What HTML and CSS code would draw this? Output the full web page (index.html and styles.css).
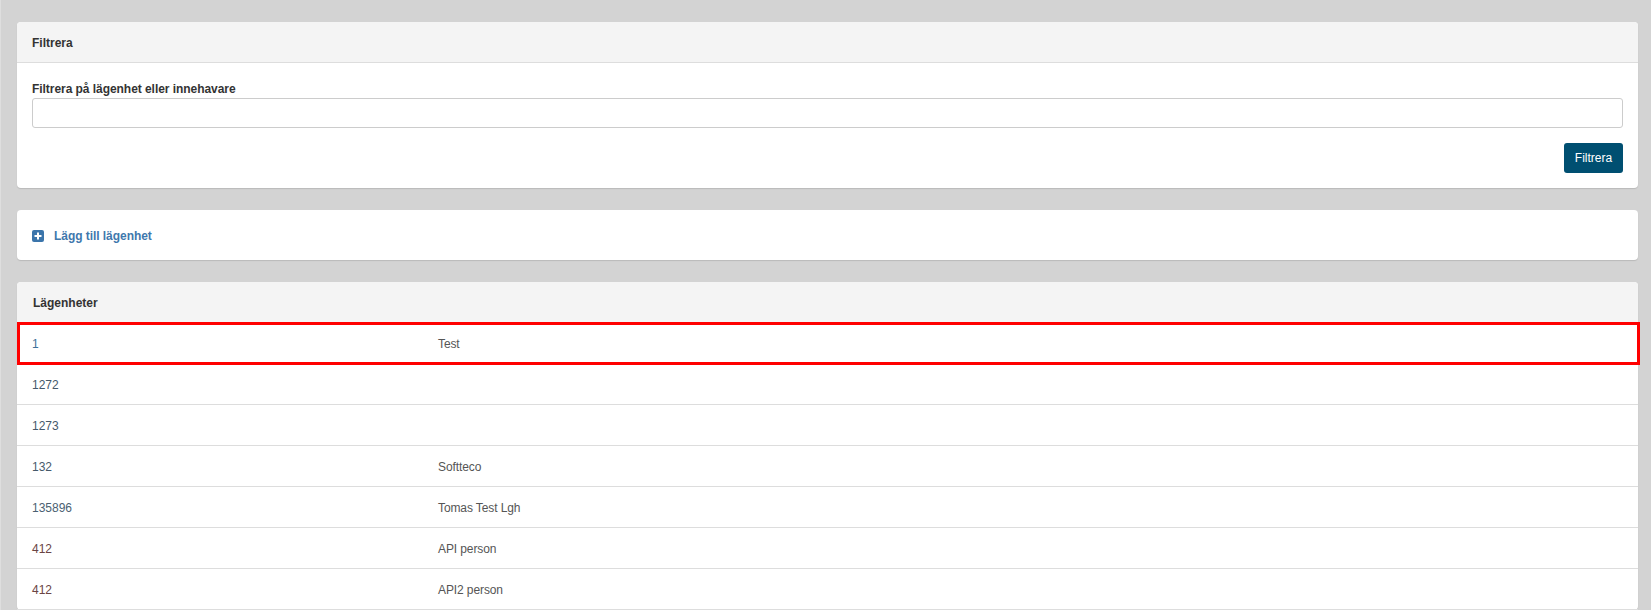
FILE: index.html
```html
<!DOCTYPE html>
<html lang="sv">
<head>
    <meta charset="UTF-8">
    <meta name="viewport" content="width=device-width, initial-scale=1.0">
    <title>Lägenheter</title>
    <link rel="stylesheet" href="styles.css">
</head>
<body>
    <div class="card card-filter">
        <div class="card-head">Filtrera</div>
        <div class="card-body">
            <label for="filter">Filtrera på lägenhet eller innehavare</label>
            <input type="text" id="filter">
            <div class="actions">
                <button>Filtrera</button>
            </div>
        </div>
    </div>

    <div class="card card-add">
        <svg class="icon-add" width="12" height="12" viewBox="0 0 12 12">
            <rect width="12" height="12" rx="2" fill="#3b75ab"/>
            <path d="M5 2.5h2V5h2.5v2H7v2.5H5V7H2.5V5H5z" fill="#fff"/>
        </svg>
        <a href="#">Lägg till lägenhet</a>
    </div>

    <div class="card">
        <div class="card-head head-list">Lägenheter</div>
        <div class="row row-marked"><a class="num blue" href="#">1</a><span class="owner">Test</span></div>
        <div class="row"><a class="num navy" href="#">1272</a><span class="owner"></span></div>
        <div class="row"><a class="num navy" href="#">1273</a><span class="owner"></span></div>
        <div class="row"><a class="num navy" href="#">132</a><span class="owner">Softteco</span></div>
        <div class="row"><a class="num slate" href="#">135896</a><span class="owner">Tomas Test Lgh</span></div>
        <div class="row"><a class="num maroon" href="#">412</a><span class="owner">API person</span></div>
        <div class="row"><a class="num maroon" href="#">412</a><span class="owner">API2 person</span></div>
    </div>
</body>
</html>
```

FILE: styles.css
```css
html {
    background: #d3d3d3;
}
body {
    font-family: "Liberation Sans", Arial, sans-serif;
    font-size: 12px;
    color: #333;
    margin: 0;
    padding: 22px 13px 0 16px;
    border-left: 1px solid #dedede;
    height: 588px;
    overflow: hidden;
}
.card {
    background: white;
    border-radius: 4px;
    box-shadow: 0 1px 1px rgba(0, 0, 0, 0.12);
    margin-bottom: 21px;
}
.card-filter {
    margin-bottom: 22px;
}
.card-head {
    height: 40px;
    line-height: 42px;
    padding-left: 15px;
    background: #f4f4f4;
    border-bottom: 1px solid #ddd;
    border-radius: 4px 4px 0 0;
    font-weight: bold;
}
.head-list {
    height: 41px;
    line-height: 43px;
    padding-left: 16px;
    border-bottom: none;
}
.card-body {
    padding: 18px 15px 15px;
}
label {
    display: block;
    font-weight: bold;
    letter-spacing: -0.05px;
    padding-top: 1px;
    margin-bottom: 1px;
    line-height: 15px;
}
input {
    display: block;
    width: 100%;
    height: 30px;
    border: 1px solid #ccc;
    border-radius: 3px;
    box-sizing: border-box;
}
.actions {
    display: flex;
    justify-content: flex-end;
    margin-top: 15px;
}
button {
    width: 59px;
    height: 30px;
    padding: 0;
    background: #004f71;
    color: white;
    border: none;
    border-radius: 3px;
    font-family: inherit;
    font-size: 12px;
}
.card-add {
    display: flex;
    align-items: center;
    height: 48px;
    padding: 2px 0 0 15px;
    margin-bottom: 22px;
}
.card-add a {
    margin-left: 10px;
    font-weight: bold;
    letter-spacing: -0.05px;
    color: #3f78ad;
    text-decoration: none;
}
.row {
    display: flex;
    align-items: center;
    height: 38px;
    padding-top: 2px;
    border-bottom: 1px solid #ddd;
}
.row-marked {
    position: relative;
}
.row-marked::after {
    content: "";
    position: absolute;
    left: 0;
    right: -2px;
    top: -1px;
    bottom: -2px;
    border: 3px solid #f00;
}
.num {
    width: 406px;
    padding-left: 15px;
    text-decoration: none;
}
.blue {
    color: #3d7199;
}
.navy {
    color: #45596b;
}
.slate {
    color: #4a5f72;
}
.maroon {
    color: #6a4444;
}
.owner {
    color: #555;
    letter-spacing: -0.1px;
}
```
